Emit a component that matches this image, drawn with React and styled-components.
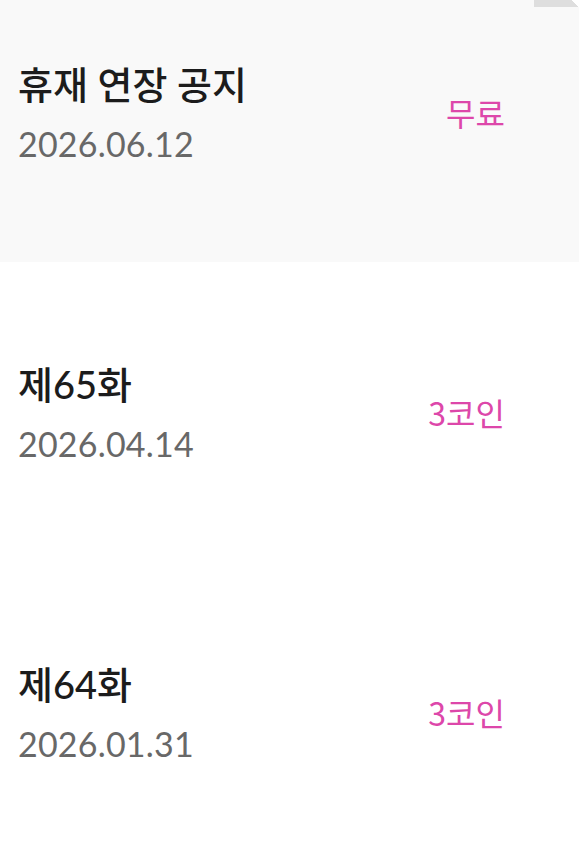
import React from "react";
import styled, { createGlobalStyle } from "styled-components";

const episodes = [
  { id: 0, title: "휴재 연장 공지", date: "2026.06.12", price: "무료", notice: true },
  { id: 65, title: "제65화", date: "2026.04.14", price: "3코인" },
  { id: 64, title: "제64화", date: "2026.01.31", price: "3코인" },
];

function App() {
  return (
    <>
      <GlobalStyle />
      <Page>
        <List>
          {episodes.map((ep) => (
            <Row key={ep.id} highlight={ep.notice}>
              {ep.notice && <DogEar />}
              <Info>
                <Title>{ep.title}</Title>
                <DateText>{ep.date}</DateText>
              </Info>
              <Price>{ep.price}</Price>
            </Row>
          ))}
        </List>
      </Page>
    </>
  );
}

const GlobalStyle = createGlobalStyle`
  html, body {
    margin: 0;
    padding: 0;
    background: #ffffff;
  }
  body {
    font-family: Lato, "Noto Sans CJK KR", sans-serif;
    overflow: hidden;
  }
`;

const Page = styled.div`
  width: 579px;
  height: 846px;
  overflow: hidden;
`;

const List = styled.ul`
  list-style: none;
  margin: -38px 0 0;
  padding: 0;
`;

const Row = styled.li`
  position: relative;
  height: 300px;
  display: flex;
  align-items: center;
  justify-content: space-between;
  padding: 0 74px 0 18px;
  box-sizing: border-box;
  background: ${(props) => (props.highlight ? "#f9f9f9" : "#ffffff")};
`;

const DogEar = styled.div`
  position: absolute;
  top: 0;
  right: 0;
  width: 45px;
  height: 45px;
  background: linear-gradient(to top right, #dedede 50%, #ffffff 50%);
`;

const Info = styled.div`
  display: flex;
  flex-direction: column;
  gap: 14px;
  margin-top: 4px;
`;

const Title = styled.div`
  font-size: 38px;
  line-height: 46px;
  font-weight: 500;
  color: #1c1c1c;
`;

const DateText = styled.div`
  font-size: 34px;
  line-height: 46px;
  font-weight: 400;
  color: #686868;
  letter-spacing: 0.2px;
`;

const Price = styled.div`
  font-family: "Noto Sans CJK KR", Lato, sans-serif;
  font-size: 32px;
  line-height: 40px;
  color: #dd47aa;
`;

export default App;
